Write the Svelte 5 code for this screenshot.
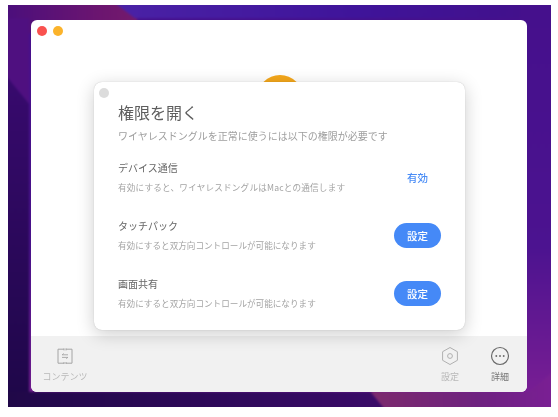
<script>
  const rows = [
    { title: 'デバイス通信', desc: '有効にすると、ワイヤレスドングルはMacとの通信します', state: 'on' },
    { title: 'タッチパック', desc: '有効にすると双方向コントロールが可能になります', state: 'btn' },
    { title: '画面共有', desc: '有効にすると双方向コントロールが可能になります', state: 'btn' }
  ];
</script>

<div class="page">
  <div class="wall">
    <svg class="art" viewBox="0 0 543 402" preserveAspectRatio="none" aria-hidden="true">
      <defs>
        <linearGradient id="a" x1="0" y1="0" x2="1" y2="0">
          <stop offset="0" stop-color="#4b0f7c" />
          <stop offset="0.7" stop-color="#6b1570" />
          <stop offset="1" stop-color="#741a6c" />
        </linearGradient>
        <linearGradient id="b" x1="0" y1="0" x2="1" y2="0">
          <stop offset="0" stop-color="#4a22a6" />
          <stop offset="0.6" stop-color="#3f149a" />
          <stop offset="1" stop-color="#42118c" />
        </linearGradient>
        <linearGradient id="c" x1="0" y1="0" x2="0" y2="1">
          <stop offset="0" stop-color="#45108c" />
          <stop offset="0.6" stop-color="#4c1390" />
          <stop offset="1" stop-color="#7d1f94" />
        </linearGradient>
        <linearGradient id="d" x1="0" y1="0" x2="0" y2="1">
          <stop offset="0" stop-color="#380a6e" />
          <stop offset="1" stop-color="#1e0748" />
        </linearGradient>
        <linearGradient id="e" x1="0" y1="0" x2="1" y2="0">
          <stop offset="0" stop-color="#200848" />
          <stop offset="1" stop-color="#3a0b68" />
        </linearGradient>
        <linearGradient id="f" x1="0" y1="0" x2="1" y2="0">
          <stop offset="0" stop-color="#7c2a6c" />
          <stop offset="0.6" stop-color="#6e2280" />
          <stop offset="1" stop-color="#7a1f94" />
        </linearGradient>
      </defs>
      <rect width="543" height="402" fill="url(#c)" />
      <rect width="130" height="30" fill="url(#a)" />
      <polygon points="108,0 510,0 510,15 128,15" fill="url(#b)" />
      <polygon points="0,15 23,15 23,100 0,72" fill="#4f1080" />
      <polygon points="0,72 23,100 23,402 0,402" fill="url(#d)" />
      <polygon points="0,385 362,385 376,402 0,402" fill="url(#e)" />
      <polygon points="362,385 520,385 543,365 543,402 376,402" fill="url(#f)" />
    </svg>

    <div class="window">
      <div class="titlebar">
        <span class="light red"></span>
        <span class="light amber"></span>
      </div>

      <div class="body">
        <div class="disc"></div>
      </div>

      <div class="footer">
        <div class="tool muted">
          <svg width="18" height="20" viewBox="0 0 18 20" fill="none" stroke="#a4a4a4" stroke-width="1">
            <path d="M8 3.2H2v14h6" />
            <path d="M10 3.2h6v14h-6" />
            <path d="M8 2.4v2M8 16v2M10 2.4v2M10 16v2" />
            <path d="M6 8.8h6M6.2 8.8l1.5-1.3M12 11.4H6M11.8 11.4l-1.5 1.3" stroke-width="0.9" />
          </svg>
          <span>コンテンツ</span>
        </div>
        <div class="spacer"></div>
        <div class="tool muted narrow">
          <svg width="18" height="20" viewBox="0 0 18 20" fill="none" stroke="#b0b0b0" stroke-width="1">
            <path d="M9 1.5l7.4 4.2v8.6L9 18.5l-7.4-4.2V5.7z" />
            <circle cx="9" cy="10" r="2.4" />
          </svg>
          <span>設定</span>
        </div>
        <div class="tool narrow strong">
          <svg width="20" height="20" viewBox="0 0 20 20" fill="none">
            <circle cx="10" cy="10" r="8.5" stroke="#6a6a6a" stroke-width="1.2" />
            <circle cx="6.3" cy="10" r="0.95" fill="#6a6a6a" />
            <circle cx="10" cy="10" r="0.95" fill="#6a6a6a" />
            <circle cx="13.7" cy="10" r="0.95" fill="#6a6a6a" />
          </svg>
          <span>詳細</span>
        </div>
      </div>

      <section class="dialog">
        <span class="close"></span>
        <h1>権限を開く</h1>
        <p class="lead">ワイヤレスドングルを正常に使うには以下の権限が必要です</p>
        <div class="rows">
          {#each rows as row, i}
            <div class="row">
              <div class="copy">
                <div class="name">{row.title}</div>
                <div class="desc" class:wide={i === 0}>{row.desc}</div>
              </div>
              <div class="action">
                {#if row.state === 'on'}
                  <span class="enabled">有効</span>
                {:else}
                  <button type="button">設定</button>
                {/if}
              </div>
            </div>
          {/each}
        </div>
      </section>
    </div>
  </div>
</div>

<style>
  :global(body) {
    background: #fff;
    font-family: "Noto Sans CJK JP", "Noto Sans", sans-serif;
  }
  .page {
    padding: 5px 7px 10px 8px;
    height: 402px;
  }
  .wall {
    position: relative;
    overflow: hidden;
    box-sizing: border-box;
    height: 402px;
    padding: 15px 24px 15px 23px;
  }
  .art {
    position: absolute;
    inset: -2px;
    width: calc(100% + 4px);
    height: calc(100% + 4px);
    filter: blur(1px);
  }
  .window {
    position: relative;
    display: flex;
    flex-direction: column;
    height: 372px;
    background: #fff;
    border-radius: 6px;
    overflow: hidden;
    filter: blur(0.35px);
  }
  .titlebar {
    display: flex;
    gap: 6px;
    padding: 6px 6px 0;
    height: 14px;
  }
  .light {
    width: 10px;
    height: 10px;
    border-radius: 50%;
  }
  .red { background: #f9524f; }
  .amber { background: #fbb32b; }
  .body {
    position: relative;
    flex: 1;
  }
  .disc {
    position: absolute;
    left: 226px;
    top: 35px;
    width: 46px;
    height: 46px;
    border-radius: 50%;
    background: #f5a81c;
  }
  .footer {
    display: flex;
    height: 56px;
    box-sizing: border-box;
    padding: 10px 2px 0 0;
    background: #f1f1f1;
  }
  .spacer { flex: 1; }
  .tool {
    display: flex;
    flex-direction: column;
    align-items: center;
    gap: 4px;
    width: 68px;
    font-size: 9px;
    line-height: 13px;
  }
  .tool svg { height: 20px; }
  .tool.narrow { width: 50px; }
  .muted { color: #b8b8b8; }
  .strong { color: #767676; }
  .dialog {
    position: absolute;
    left: 63px;
    top: 62px;
    box-sizing: border-box;
    width: 371px;
    height: 248px;
    padding: 18px 24px 0;
    background: #fff;
    border-radius: 8px;
    box-shadow: 0 0 1px rgba(0, 0, 0, 0.25), 0 4px 18px rgba(0, 0, 0, 0.2);
  }
  .close {
    position: absolute;
    left: 5px;
    top: 6px;
    width: 10px;
    height: 10px;
    border-radius: 50%;
    background: #dcdcdc;
  }
  h1 {
    margin: 0;
    font-size: 16px;
    line-height: 24px;
    font-weight: 400;
    color: #5e5e5e;
  }
  .lead {
    margin: 4px 0 0;
    font-size: 10px;
    line-height: 15px;
    color: #9e9e9e;
  }
  .rows {
    display: flex;
    flex-direction: column;
    gap: 25px;
    margin-top: 18px;
  }
  .row {
    display: flex;
    align-items: center;
    height: 33px;
  }
  .copy { flex: 1; }
  .name {
    font-size: 10px;
    line-height: 14px;
    color: #666;
  }
  .desc {
    margin-top: 6px;
    font-size: 8.6px;
    line-height: 13px;
    color: #a4a4a4;
    white-space: nowrap;
  }
  .desc.wide { letter-spacing: 0.2px; }
  .action {
    display: flex;
    justify-content: center;
    width: 47px;
  }
  .enabled {
    color: #4a8df6;
    font-size: 10.5px;
    font-weight: 500;
  }
  button {
    width: 47px;
    height: 25px;
    padding: 0;
    border: 0;
    border-radius: 13px;
    background: #4589f7;
    color: #fff;
    font: 500 10.5px "Noto Sans CJK JP", sans-serif;
  }
</style>
